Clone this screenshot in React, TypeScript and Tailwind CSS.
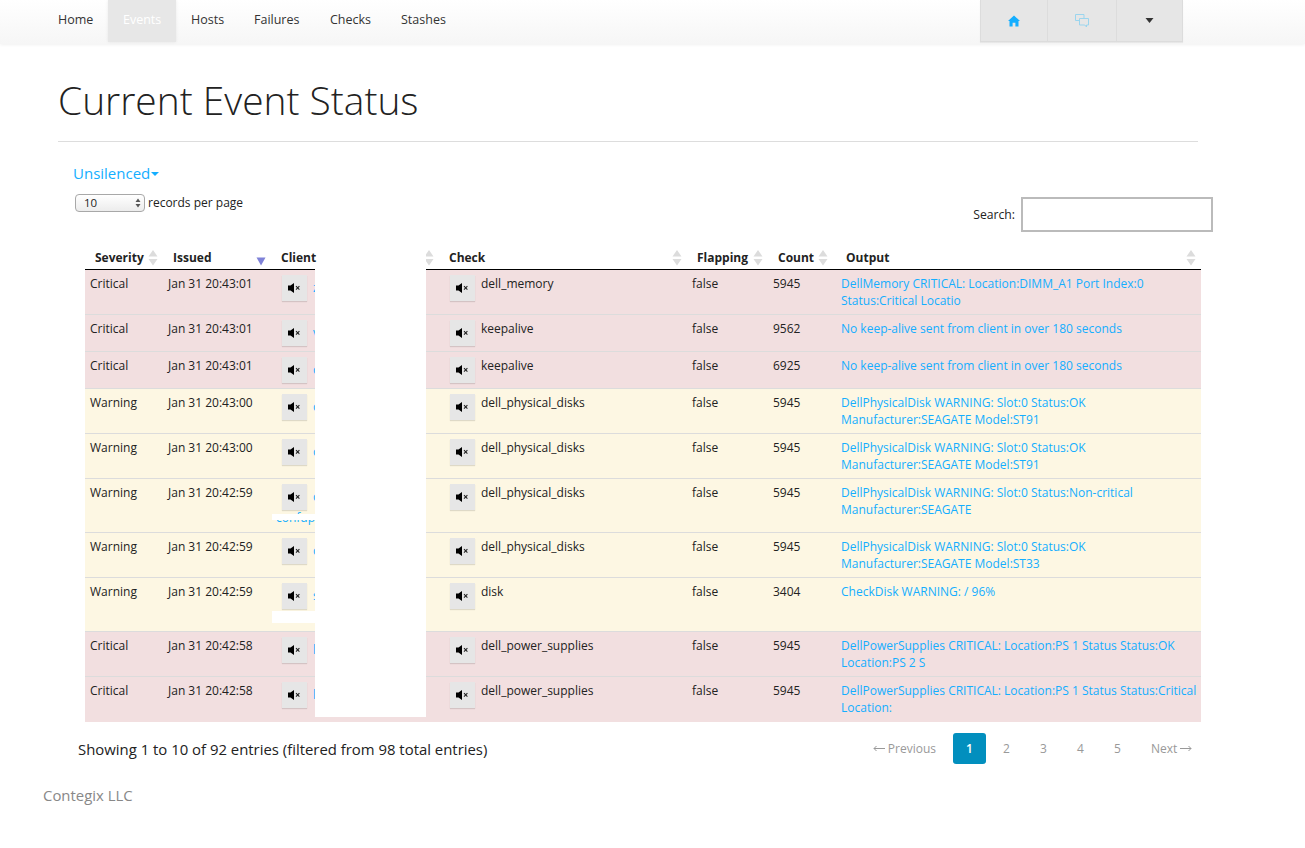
import React from 'react';

type Row = {
  severity: string;
  issued: string;
  client: string;
  clientExtra?: string;
  check: string;
  count: string;
  output: string;
  rowHeight: string;
  rowBg: string;
};

const CRITICAL = 'bg-[#f2dfe0]';
const WARNING = 'bg-[#fdf7e3]';

const rows: Row[] = [
  { severity: 'Critical', issued: 'Jan 31 20:43:01', client: 'z', check: 'dell_memory', count: '5945', output: 'DellMemory CRITICAL: Location:DIMM_A1 Port Index:0 Status:Critical Locatio', rowHeight: 'h-[45px]', rowBg: CRITICAL },
  { severity: 'Critical', issued: 'Jan 31 20:43:01', client: 'v', check: 'keepalive', count: '9562', output: 'No keep-alive sent from client in over 180 seconds', rowHeight: 'h-[37px]', rowBg: CRITICAL },
  { severity: 'Critical', issued: 'Jan 31 20:43:01', client: 'c', check: 'keepalive', count: '6925', output: 'No keep-alive sent from client in over 180 seconds', rowHeight: 'h-[37px]', rowBg: CRITICAL },
  { severity: 'Warning', issued: 'Jan 31 20:43:00', client: 'c', check: 'dell_physical_disks', count: '5945', output: 'DellPhysicalDisk WARNING: Slot:0 Status:OK Manufacturer:SEAGATE Model:ST91', rowHeight: 'h-[45px]', rowBg: WARNING },
  { severity: 'Warning', issued: 'Jan 31 20:43:00', client: 'c', check: 'dell_physical_disks', count: '5945', output: 'DellPhysicalDisk WARNING: Slot:0 Status:OK Manufacturer:SEAGATE Model:ST91', rowHeight: 'h-[45px]', rowBg: WARNING },
  { severity: 'Warning', issued: 'Jan 31 20:42:59', client: 'c', clientExtra: 'confup', check: 'dell_physical_disks', count: '5945', output: 'DellPhysicalDisk WARNING: Slot:0 Status:Non-critical Manufacturer:SEAGATE', rowHeight: 'h-[54px]', rowBg: WARNING },
  { severity: 'Warning', issued: 'Jan 31 20:42:59', client: 'c', check: 'dell_physical_disks', count: '5945', output: 'DellPhysicalDisk WARNING: Slot:0 Status:OK Manufacturer:SEAGATE Model:ST33', rowHeight: 'h-[45px]', rowBg: WARNING },
  { severity: 'Warning', issued: 'Jan 31 20:42:59', client: 's', check: 'disk', count: '3404', output: 'CheckDisk WARNING: / 96%', rowHeight: 'h-[54px]', rowBg: WARNING },
  { severity: 'Critical', issued: 'Jan 31 20:42:58', client: 'l', check: 'dell_power_supplies', count: '5945', output: 'DellPowerSupplies CRITICAL: Location:PS 1 Status Status:OK Location:PS 2 S', rowHeight: 'h-[45px]', rowBg: CRITICAL },
  { severity: 'Critical', issued: 'Jan 31 20:42:58', client: 'l', check: 'dell_power_supplies', count: '5945', output: 'DellPowerSupplies CRITICAL: Location:PS 1 Status Status:Critical Location:', rowHeight: 'h-[45px]', rowBg: CRITICAL },
];

const SortIcon = () => (
  <svg width="10" height="16" viewBox="0 0 10 16" className="shrink-0">
    <path d="M5 0 L9.5 6.5 H0.5 Z M0.5 9 H9.5 L5 15.5 Z" fill="#dcdcdc" />
  </svg>
);

const SortedIcon = () => (
  <svg width="10" height="9" viewBox="0 0 10 9" className="shrink-0 mt-[7px]">
    <path d="M0.5 0.5 H9.5 L5 8.5 Z" fill="#7f82d8" />
  </svg>
);

const MuteIcon = () => (
  <svg width="13" height="10" viewBox="0 0 13 10">
    <path d="M0 2.5 H2.5 L6 0 V10 L2.5 7.5 H0 Z" fill="#000" />
    <path d="M8 3.2 L11.4 6.6 M11.4 3.2 L8 6.6" stroke="#222" strokeWidth="1.1" fill="none" />
  </svg>
);

const SilenceButton = () => (
  <button className="mt-[5px] ml-[6px] w-[25px] h-[26px] bg-[#e6e6e6] shadow-[0_1px_1px_rgba(0,0,0,0.12)] flex items-center justify-center shrink-0">
    <MuteIcon />
  </button>
);

const Header = ({ label, pr = 'pr-[5px]', sorted = false }: { label: string; pr?: string; sorted?: boolean }) => (
  <th className="h-[20px] p-0 border-b border-black align-top">
    <div className={`flex justify-between pl-[10px] ${pr} h-[19px] items-start`}>
      <span className="font-bold text-[12px] leading-[15px] text-[#222]">{label}</span>
      {sorted ? <SortedIcon /> : <SortIcon />}
    </div>
  </th>
);

const ArrowLeft = () => (
  <svg width="12" height="7" viewBox="0 0 12 7" fill="none" stroke="#999" strokeWidth="1">
    <path d="M12 3.5 H1 M3.5 1 L1 3.5 L3.5 6" />
  </svg>
);

const ArrowRight = () => (
  <svg width="12" height="7" viewBox="0 0 12 7" fill="none" stroke="#999" strokeWidth="1">
    <path d="M0 3.5 H11 M8.5 1 L11 3.5 L8.5 6" />
  </svg>
);

const navItems = [
  { label: 'Home', width: 'w-[65px]' },
  { label: 'Events', width: 'w-[68px]' },
  { label: 'Hosts', width: 'w-[63px]' },
  { label: 'Failures', width: 'w-[76px]' },
  { label: 'Checks', width: 'w-[71px]' },
  { label: 'Stashes', width: 'w-[75px]' },
];

export default function App() {
  return (
    <div className="min-h-[848px] bg-white text-[#222] font-['Open_Sans',sans-serif] text-[12px]">
      {/* navbar */}
      <nav className="h-[44px] flex justify-between pl-[43px] pr-[122px] bg-gradient-to-b from-white to-[#f6f6f6] shadow-[0_1px_3px_rgba(0,0,0,0.06)]">
        <ul className="flex">
          {navItems.map((item) => (
            <li
              key={item.label}
              className={
                item.label === 'Events'
                  ? `${item.width} pl-[15px] h-[42px] pb-[2px] flex items-center text-[12.5px] text-white bg-[#e7e7e7] shadow-[0_0_3px_rgba(0,0,0,0.08)]`
                  : `${item.width} pl-[15px] h-[40px] flex items-center text-[12.5px] text-[#333]`
              }
            >
              {item.label}
            </li>
          ))}
        </ul>
        <div className="flex h-[42px] gap-px bg-[#dcdcdc] border-x border-b border-[#dcdcdc] shadow-[0_1px_1px_rgba(0,0,0,0.06)]">
          <div className="w-[66px] bg-[#e6e6e6] flex items-center justify-center">
            <svg width="12" height="12" viewBox="0 0 12 12">
              <path d="M6 0.5 L12 6 H10.5 V11.5 H7.4 V7.8 H4.6 V11.5 H1.5 V6 H0 Z" fill="#14aeff" />
            </svg>
          </div>
          <div className="w-[68px] bg-[#e6e6e6] flex items-center justify-center">
            <svg width="14" height="14" viewBox="0 0 14 14" fill="none" stroke="#9bd5ee" strokeWidth="1">
              <path d="M0.5 0.5 H9 V6.5 H0.5 Z" />
              <path d="M4.5 4.5 H13.5 V11 H11.5 V13 L9.8 11 H4.5 Z" fill="#e6e6e6" />
            </svg>
          </div>
          <div className="w-[65px] bg-[#e6e6e6] flex items-center justify-center">
            <svg width="9" height="5" viewBox="0 0 9 5">
              <path d="M0.5 0 H8.5 L4.5 5 Z" fill="#333" />
            </svg>
          </div>
        </div>
      </nav>

      {/* page header */}
      <div className="ml-[58px] w-[1140px] pt-[30px]">
        <h1 className="text-[38.9px] leading-[52px] font-light text-[#222]">Current Event Status</h1>
        <hr className="mt-[15px] border-[#dddddd]" />
      </div>

      {/* filter + length + search */}
      <div className="ml-[73px] w-[1140px] flex justify-between">
        <div>
          <div className="mt-[21px] flex items-center text-[15px] leading-[20px] text-[#14aeff]">
            Unsilenced
            <svg width="8" height="4" viewBox="0 0 8 4" className="ml-[1px] mt-[2px]">
              <path d="M0 0 H8 L4 4 Z" fill="#14aeff" />
            </svg>
          </div>
          <div className="mt-[11px] ml-[2px] flex items-center gap-[3px] text-[12px]">
            <div className="w-[70px] h-[18px] rounded-[4px] border border-[#a8a8a8] bg-gradient-to-b from-white to-[#ececec] flex items-center justify-between pl-[8px] pr-[3px] text-[11.5px]">
              10
              <svg width="6" height="10" viewBox="0 0 6 10">
                <path d="M3 0.5 L5.5 4 H0.5 Z M0.5 6 H5.5 L3 9.5 Z" fill="#555" />
              </svg>
            </div>
            records per page
          </div>
        </div>
        <div className="mt-[55px] flex items-center gap-[6px] text-[12.2px]">
          <span className="pt-[2px]">Search:</span>
          <input className="w-[192px] h-[35px] border-2 border-[#bbbbbb] bg-white" />
        </div>
      </div>

      {/* table */}
      <div className="relative ml-[85px] w-[1116px] mt-[18px]">
        <table className="w-[1116px] table-fixed border-separate border-spacing-0">
          <colgroup>
            <col className="w-[78px]" />
            <col className="w-[108px]" />
            <col className="w-[168px]" />
            <col className="w-[248px]" />
            <col className="w-[81px]" />
            <col className="w-[68px]" />
            <col className="w-[365px]" />
          </colgroup>
          <thead>
            <tr className="text-left">
              <Header label="Severity" />
              <Header label="Issued" sorted />
              <Header label="Client" />
              <Header label="Check" />
              <Header label="Flapping" />
              <Header label="Count" pr="pr-[8px]" />
              <Header label="Output" />
            </tr>
          </thead>
          <tbody className="leading-[17px]">
            {rows.map((row, i) => {
              const cell = `${row.rowHeight} ${row.rowBg} p-0 align-top ${i < rows.length - 1 ? 'border-b border-[#dcdcdc]' : ''}`;
              return (
                <tr key={i}>
                  <td className={cell}><div className="pl-[5px] pt-[5px]">{row.severity}</div></td>
                  <td className={cell}><div className="pl-[5px] pt-[5px]">{row.issued}</div></td>
                  <td className={cell}>
                    <div className="pl-[5px]">
                      <div className="flex">
                        <SilenceButton />
                        <span className="ml-[6px] mt-[9px] text-[#14aeff]">{row.client}</span>
                      </div>
                      {row.clientExtra && <div className="text-[#14aeff] -mt-[1px]">{row.clientExtra}</div>}
                    </div>
                  </td>
                  <td className={cell}>
                    <div className="pl-[5px] flex">
                      <SilenceButton />
                      <span className="ml-[6px] mt-[5px]">{row.check}</span>
                    </div>
                  </td>
                  <td className={cell}><div className="pl-[5px] pt-[5px]">false</div></td>
                  <td className={cell}><div className="pl-[5px] pt-[5px]">{row.count}</div></td>
                  <td className={cell}><div className="pl-[5px] pt-[5px] text-[#14aeff]">{row.output}</div></td>
                </tr>
              );
            })}
          </tbody>
        </table>

        {/* redacted bits */}
        <div className="absolute left-[232px] top-0 w-[109px] h-[19px] bg-white" />
        <div className="absolute left-[230px] top-[19px] w-[111px] h-[448px] bg-white" />
        <div className="absolute left-[187px] top-[264px] w-[43px] h-[6px] bg-white" />
        <div className="absolute left-[187px] top-[361px] w-[43px] h-[12px] bg-white" />
      </div>

      {/* footer of table */}
      <div className="ml-[78px] w-[1120px] mt-[11px] flex justify-between items-center">
        <div className="text-[14.9px] pt-[1px]">Showing 1 to 10 of 92 entries (filtered from 98 total entries)</div>
        <div className="flex items-center text-[12px] text-[#999]">
          <span className="w-[63px] mr-[17px] flex justify-between items-center">
            <ArrowLeft />
            Previous
          </span>
          <span className="w-[33px] h-[31px] rounded-[3px] bg-[#028fbe] text-white font-semibold flex items-center justify-center">1</span>
          <span className="w-[37px] text-center ml-[2px]">2</span>
          <span className="w-[37px] text-center">3</span>
          <span className="w-[37px] text-center">4</span>
          <span className="w-[37px] text-center">5</span>
          <span className="w-[41px] ml-[15px] mr-[6px] flex justify-between items-center">
            Next
            <ArrowRight />
          </span>
        </div>
      </div>

      <div className="ml-[43px] mt-[20px] text-[14.9px] text-[#888888]">Contegix LLC</div>
    </div>
  );
}
